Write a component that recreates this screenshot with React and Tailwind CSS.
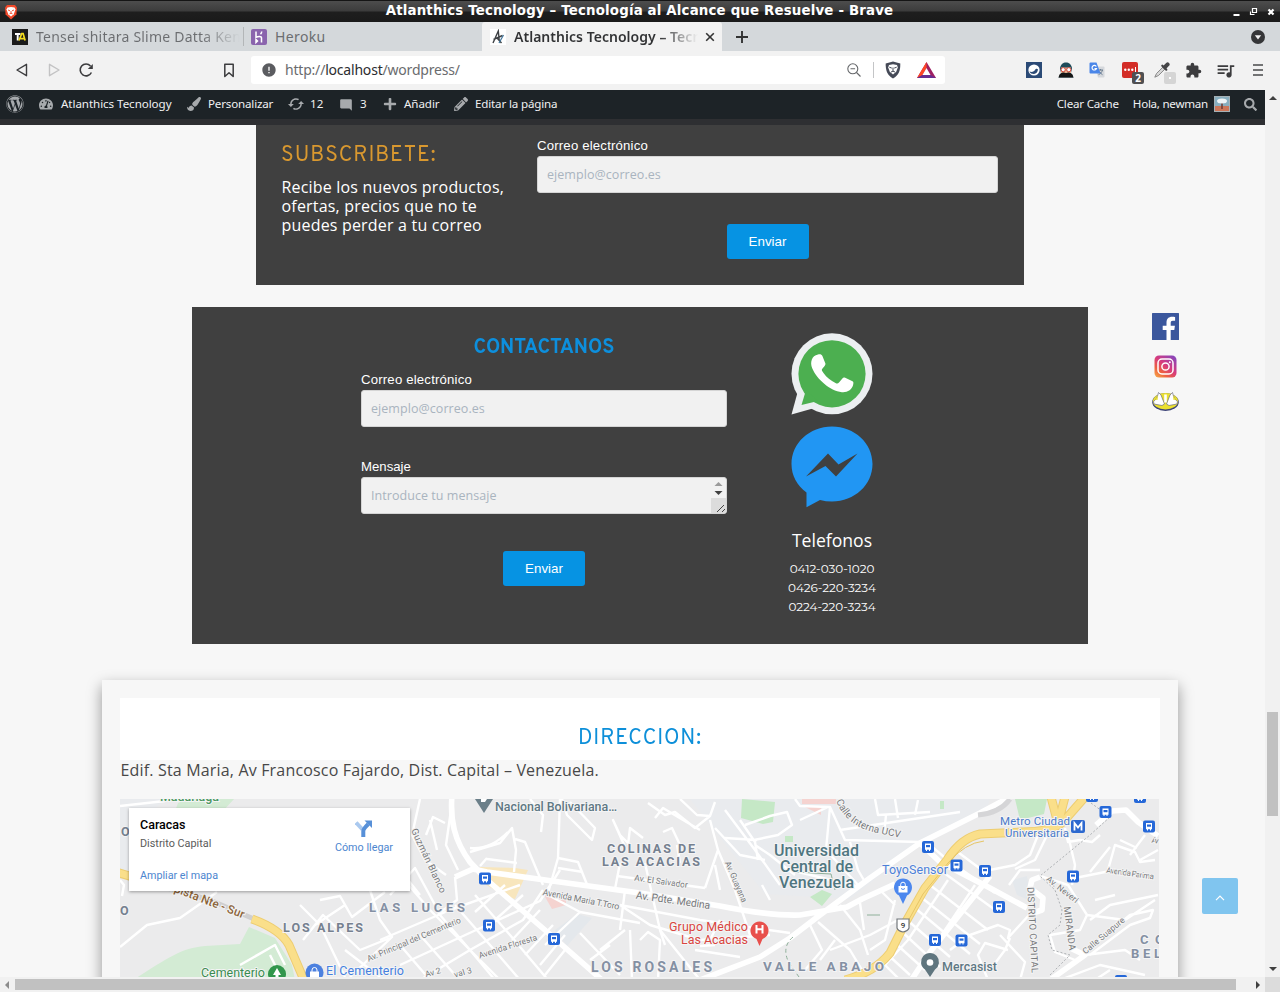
import React from "react";
import { FaWordpress, FaTachometerAlt, FaPaintBrush, FaPlus, FaPencilAlt, FaSearch } from "react-icons/fa";
import { MdExtension, MdQueueMusic, MdModeComment, MdSync, MdError } from "react-icons/md";

const ui = "font-['Noto_Sans','Open_Sans',sans-serif]";
const body = "font-['Open_Sans',sans-serif]";
const label = "font-['Liberation_Sans',sans-serif]";

function TitleBar() {
  return (
    <div className="relative flex h-[22px] items-center border-t border-[#151515] bg-[linear-gradient(#4d4d4d_0px,#3c3c3c_10px,#1e1e1e_11px,#1a1a1a_21px)]">
      <svg className="ml-[4px] h-[16px] w-[14px]" viewBox="0 0 14 16">
        <path d="M3 1h8l2 2.500-.6 7L7 15.500 1.600 10.500 1 3.500z" fill="#f0492a" />
        <path d="M3.500 3.600 7 3l3.500.6 1 2-1.800 4.600L7 12.500l-2.700-2.300L2.500 5.600z" fill="#fff" />
        <path d="M4 6l2 .8M10 6l-2 .8M7 7v2.500M5.500 9.800l1.500-.6 1.500.6" stroke="#f0492a" strokeWidth=".9" fill="none" />
      </svg>
      <div className="flex-1 pb-[2px] pl-[29px] text-center font-['DejaVu_Sans',sans-serif] text-[13.330px] leading-[20px] font-bold tracking-[0.18px] whitespace-nowrap text-white">
        Atlanthics Tecnology – Tecnología al Alcance que Resuelve - Brave
      </div>
      <svg className="mr-[4px] h-[10px] w-[44px]" viewBox="0 0 44 10" fill="none" stroke="#fff">
        <path d="M1.500 8h6" strokeWidth="2" />
        <path d="M20.500 1.500h4v4h-4zM18.500 4.500v3h4" strokeWidth="1.200" />
        <path d="M36.500 2.500l5 5M41.500 2.500l-5 5" strokeWidth="2.200" />
      </svg>
    </div>
  );
}

function TabStrip() {
  return (
    <div className={`flex h-[29px] bg-[#d4d8db] text-[#6b6d70] ${ui}`}>
      <div className="my-[5px] flex w-[244px] items-center border-r border-[#b3b6b8] pl-[12px]">
        <svg className="h-4 w-4 shrink-0" viewBox="0 0 16 16">
          <rect width="16" height="16" fill="#1b1b1b" />
          <path d="M3 5h5.500M5.700 5v6.500" stroke="#fff" strokeWidth="1.900" />
          <path d="M7 11.500 9.800 4.500h1.300l2 7M8.500 9.700h4" stroke="#f3dc1c" strokeWidth="1.700" fill="none" />
        </svg>
        <span className="ml-[8px] w-[204px] overflow-hidden bg-[linear-gradient(90deg,#6b6d70_165px,#d4d8db_204px)] bg-clip-text text-[14px] leading-[20px] tracking-[0.22px] whitespace-nowrap text-transparent">
          Tensei shitara Slime Datta Ken
        </span>
      </div>
      <div className="flex w-[238px] items-center pl-[7px]">
        <svg className="h-4 w-4" viewBox="0 0 16 16">
          <rect width="16" height="16" rx="2" fill="#8a64ad" />
          <path d="M5 2.500v5.800c2-.9 5.500-1.400 5.500.8v4.400M10.700 2.500c0 1.200-.5 2-1.200 2.700M5 10.500v3l1.500-1.500z" stroke="#fff" strokeWidth="1.500" fill="none" />
        </svg>
        <span className="ml-[8px] text-[14px] tracking-[0.38px]">Heroku</span>
      </div>
      <div className="flex w-[240px] items-center rounded-t-[3px] bg-[#f2f2f2] pl-[8px] text-[#333]">
        <svg className="h-4 w-4 shrink-0" viewBox="0 0 16 16">
          <rect width="16" height="16" fill="#fff" />
          <path d="M3 14 8.300 2 9.300 12M3.500 10.500 12.500 6.500M7 9l4.500 5" stroke="#3d4044" strokeWidth="1.400" fill="none" />
          <path d="M13.500 6 9 14" stroke="#44789e" strokeWidth="1.300" />
        </svg>
        <span className="ml-[8px] w-[184px] overflow-hidden bg-[linear-gradient(90deg,#303133_145px,#f2f2f2_184px)] bg-clip-text text-[14px] leading-[20px] font-semibold tracking-[0.03px] whitespace-nowrap text-transparent">
          Atlanthics Tecnology – Tecnología
        </span>
        <svg className="ml-[7px] h-[10px] w-[10px]" viewBox="0 0 10 10"><path d="M1.200 1.200l7.600 7.600M8.800 1.200 1.200 8.800" stroke="#333" strokeWidth="1.600" /></svg>
      </div>
      <svg className="mt-[8px] ml-[13px] h-[14px] w-[14px]" viewBox="0 0 14 14"><path d="M7 1v12M1 7h12" stroke="#333" strokeWidth="1.900" /></svg>
      <svg className="mt-[8px] mr-[15px] ml-auto h-[14px] w-[14px]" viewBox="0 0 14 14">
        <circle cx="7" cy="7" r="7" fill="#353638" />
        <path d="M3.800 5.200h6.400L7 9.600z" fill="#f2f2f2" />
      </svg>
    </div>
  );
}

function Extensions() {
  return (
    <div className="ml-auto flex items-center pr-[17px]">
      <svg className="h-4 w-4" viewBox="0 0 16 16">
        <rect width="16" height="16" fill="#2b4a76" />
        <circle cx="8" cy="8" r="5.600" fill="#fff" />
        <path d="M3.500 9.500c2.500 1 4.500.2 6-2.200 1-.8 2-.5 2.500.3-.3 2.800-2 4.400-4 4.400-2.300 0-4-.8-4.500-2.500z" fill="#2b4a76" />
      </svg>
      <svg className="ml-[16px] h-4 w-4" viewBox="0 0 16 16">
        <path d="M2 6C3 2 5 .5 8 .5S13 2 14 6l-1 5 2.500 4.500H.5L3 11z" fill="#1f4b5a" />
        <path d="M3 5.500h10v5.500H3z" fill="#e9b391" />
        <circle cx="5.200" cy="7.700" r="2.100" fill="#fff" stroke="#c8382e" strokeWidth=".9" />
        <circle cx="10.800" cy="7.700" r="2.100" fill="#fff" stroke="#c8382e" strokeWidth=".9" />
        <path d="M1.500 12.500c2.500-2.500 5-2.500 6.500-1.300 1.500-1.200 4-1.200 6.500 1.300l1 3H.5z" fill="#151515" />
      </svg>
      <svg className="ml-[15px] h-4 w-4" viewBox="0 0 16 16">
        <path d="M6 4.500h8.500q1 0 1 1V14.500q0 1-1 1H9z" fill="#d5d8dc" />
        <path d="M9 8h5M11.500 7v1.300M13.500 8c-.7 2.300-2 3.700-4 4.700M10.500 9.500c.7 1.400 1.700 2.400 3 3.200" stroke="#6d7e90" fill="none" />
        <path d="M1 .5h6.500l4 11H1.500q-1 0-1-1V1.500q0-1 1-1z" fill="#4a86e8" />
        <path d="M7.300 4.500A2.300 2.300 0 1 0 7.500 6.500H5.500" stroke="#fff" strokeWidth="1.200" fill="none" />
      </svg>
      <div className="relative ml-[17px] h-4 w-4 rounded-[2px] bg-[#d32d27]">
        <svg className="h-4 w-4" viewBox="0 0 16 16"><g fill="#fff"><circle cx="3.300" cy="7.800" r="1.200" /><circle cx="6.800" cy="7.800" r="1.200" /><circle cx="10.300" cy="7.800" r="1.200" /><path d="M13 5h1v5h-1z" /></g></svg>
        <span className={`absolute top-[10px] left-[10px] flex h-[12px] w-[12px] items-center justify-center rounded-[2px] bg-[#505052] text-[10px] leading-[12px] font-bold text-white ${ui}`}>2</span>
      </div>
      <div className="relative ml-[16px] h-4 w-4">
        <svg className="h-4 w-4" viewBox="0 0 16 16">
          <path d="M9 5 2.500 11.500.8 15.200 4.500 13.500 11 7z" fill="#d6d6d6" stroke="#808080" strokeWidth=".9" />
          <path d="M8.300 3.700l4 4" stroke="#454547" strokeWidth="2.200" strokeLinecap="round" />
          <path d="M11 5 13.600 2.400" stroke="#454547" strokeWidth="4" strokeLinecap="round" />
        </svg>
        <span className="absolute top-[10px] left-[10px] flex h-[12px] w-[12px] items-center justify-center rounded-[2px] bg-[#d5d5d5]"><i className="h-[2px] w-[2px] bg-white" /></span>
      </div>
      <MdExtension className="ml-[15px] h-[17px] w-[17px] text-[#3c3c3e]" />
      <MdQueueMusic className="ml-[13px] h-[21px] w-[21px] text-[#3c3c3e]" />
      <svg className="ml-[17px] h-[14px] w-[10px]" viewBox="0 0 10 14"><path d="M0 2h10M0 7h10M0 12h10" stroke="#48494b" strokeWidth="1.600" /></svg>
    </div>
  );
}

function Toolbar() {
  return (
    <div className="flex h-[39px] items-center bg-[#f2f2f2] pb-px">
      <svg className="ml-[16px] h-[14px] w-[12px]" viewBox="0 0 12 14"><path d="M10.500 1.300v11.400L1 7z" fill="none" stroke="#3c3c3e" strokeWidth="1.400" strokeLinejoin="round" /></svg>
      <svg className="ml-[20px] h-[14px] w-[12px]" viewBox="0 0 12 14"><path d="M1.500 1.300v11.400L11 7z" fill="none" stroke="#c3c3c4" strokeWidth="1.400" strokeLinejoin="round" /></svg>
      <svg className="ml-[19px] h-[15px] w-[15px]" viewBox="0 0 15 15">
        <path d="M12.400 9.500A5.900 5.900 0 1 1 11.500 3" fill="none" stroke="#3c3c3e" strokeWidth="1.600" />
        <path d="M13.800 1v5H8.800z" fill="#3c3c3e" />
      </svg>
      <svg className="ml-[130px] h-[15px] w-[10px]" viewBox="0 0 10 15"><path d="M.8 1.200h8.400v12.300L5 9.800.8 13.500z" fill="none" stroke="#3c3c3e" strokeWidth="1.500" strokeLinejoin="round" /></svg>
      <div className="ml-[17px] flex h-[28px] w-[694px] items-center rounded-[3px] bg-white pl-[10px]">
        <MdError className="h-[16px] w-[16px] text-[#5b5c60]" />
        <span className={`ml-[8px] pb-px text-[14px] tracking-[-0.2px] whitespace-nowrap text-[#6a6b6e] ${ui}`}>
          http://<span className="text-[#2c2d30]">localhost</span>/wordpress/
        </span>
        <svg className="ml-auto h-[14px] w-[14px]" viewBox="0 0 14 14" fill="none" stroke="#65676a" strokeWidth="1.100"><circle cx="5.800" cy="5.800" r="5" /><path d="M9.500 9.500 13.500 13.500M3.500 5.800h4.600" /></svg>
        <div className="ml-[12px] h-[16px] w-px bg-[#c4c5c7]" />
        <svg className="ml-[11px] h-[18px] w-[16px]" viewBox="0 0 16 18">
          <path d="M8 .5 15.300 2.500C15.500 9.500 13.700 14.200 8 17.500 2.300 14.200.5 9.500.7 2.500z" fill="#454a57" />
          <path d="M4 4l4-.8L12 4l.8 2.500-1.600 4.200L8 13.500l-3.200-2.800L3.200 6.500z" fill="#fff" />
          <path d="M4.300 6.200l2.500.9M11.700 6.200l-2.500.9M8 6.500V10M6 11l2-.8 2 .8" stroke="#454a57" strokeWidth="1" fill="none" />
        </svg>
        <svg className="mr-[9px] ml-[16px] h-[16px] w-[19px]" viewBox="0 0 19 16">
          <path d="M9.500 0 19 16H0z" fill="#9e1f63" />
          <path d="M9.500 0 0 16l5.500-3 4-7z" fill="#ff4724" />
          <path d="M0 16h19l-5.500-3h-8z" fill="#662d91" />
          <path d="M9.500 6 13.500 13h-8z" fill="#fff" />
        </svg>
      </div>
      <Extensions />
    </div>
  );
}

function AdminItem({ icon: Icon, text, className, gap }) {
  return (
    <div className={`flex shrink-0 items-center whitespace-nowrap ${className}`}>
      <Icon className={`h-[14px] w-[14px] shrink-0 text-[#a7aaad] ${gap}`} />
      <span>{text}</span>
    </div>
  );
}

function AdminBar() {
  return (
    <div className={`flex h-[29px] items-center bg-[#1d2327] pb-px text-[11.600px] text-[#f0f0f1] ${ui}`}>
      <FaWordpress className="mr-[15px] ml-[6px] h-[18px] w-[18px] shrink-0 text-[#a7aaad]" />
      <AdminItem icon={FaTachometerAlt} text="Atlanthics Tecnology" gap="mr-[8px]" className="w-[148px] tracking-[-0.06px]" />
      <AdminItem icon={FaPaintBrush} text="Personalizar" gap="mr-[7px]" className="w-[101px] tracking-[-0.18px]" />
      <AdminItem icon={MdSync} text="12" gap="mr-[7px] ml-px rotate-90 scale-125" className="w-[51px]" />
      <AdminItem icon={MdModeComment} text="3" gap="mr-[7px] translate-y-px" className="w-[44px]" />
      <AdminItem icon={FaPlus} text="Añadir" gap="mr-[7px]" className="w-[71px] tracking-[-0.08px]" />
      <AdminItem icon={FaPencilAlt} text="Editar la página" gap="mr-[7px]" className="w-[110px] tracking-[-0.16px]" />
      <span className="ml-auto tracking-[-0.2px]">Clear Cache</span>
      <span className="ml-[14px] tracking-[-0.26px]">Hola, newman</span>
      <svg className="ml-[6px] h-[16px] w-[16px]" viewBox="0 0 16 16">
        <rect width="16" height="16" fill="#87aebf" />
        <rect y="10" width="16" height="6" fill="#cc7659" />
        <path d="M8 5v8" stroke="#6e3b35" strokeWidth="1.500" />
        <ellipse cx="8" cy="5" rx="5" ry="2.500" fill="#eef4f6" />
        <rect x=".5" y=".5" width="15" height="15" fill="none" stroke="#a5b1b6" />
      </svg>
      <FaSearch className="mr-[8px] ml-[14px] h-[13px] w-[13px] text-[#a7aaad]" />
    </div>
  );
}

function EmailField() {
  return (
    <div className={`h-[37px] rounded-[3px] border border-[#d5d5d5] bg-[#f1f1f1] pl-[9px] text-[12.500px] leading-[35px] tracking-[0.06px] text-[#a9b4bf] ${body}`}>ejemplo@correo.es</div>
  );
}

function SendButton() {
  return <button className={`h-[35px] w-[82px] rounded-[3px] bg-[#0693e3] text-[13.333px] text-white ${label}`}>Enviar</button>;
}

function Subscribe() {
  return (
    <section className="ml-[256px] flex h-[160px] w-[768px] bg-[#404040] px-[26px] text-white">
      <div className="w-[255px]">
        <h2 className="mt-[16px] -ml-px w-fit origin-left scale-x-[0.945] text-[22.500px] leading-[30px] tracking-[1px] text-[#d9982f] font-['Overpass','Roboto',sans-serif]">SUBSCRIBETE:</h2>
        <p className={`mt-[7px] -ml-[0.5px] w-[240px] text-[16px] leading-[19px] tracking-[0.19px] ${body}`}>
          Recibe los nuevos productos,<br />ofertas, precios que no te<br />puedes perder a tu correo
        </p>
      </div>
      <div className="flex-1">
        <div className={`mt-[13px] mb-[2px] text-[13.200px] leading-[16px] tracking-[0.18px] ${label}`}>Correo electrónico</div>
        <EmailField />
        <div className="mt-[31px] flex justify-center"><SendButton /></div>
      </div>
    </section>
  );
}

function WhatsApp() {
  return (
    <svg className="h-[82px] w-[82px]" viewBox="0 0 82 82">
      <path d="M.5 81.500 7.500 56l16 19z" fill="#eceff1" />
      <circle cx="41" cy="40.800" r="40.500" fill="#eceff1" />
      <circle cx="41" cy="40.800" r="33.600" fill="#4caf50" />
      <path d="M10.500 72 15 57l12 11z" fill="#4caf50" />
      <path d="M27 21.500c2-.5 3.700-.2 4.400 1.400l3 7.500c.6 1.500-2.600 4.500-3.400 5.800-.6 1 .3 2 1.500 3.800 3.200 4.500 7.200 7.700 12 10 1.600.8 2.400.7 3.500-.6l3.600-4.200c.8-1 1.600-.8 2.600-.4l7.300 3.500c1 .5 1 1.300.8 2.800-.9 6-6.400 8.600-11.400 8.100-12-1.500-25-13-29.700-24-2.400-5.700-.6-12.500 5.800-13.700z" fill="#fff" />
    </svg>
  );
}

function Messenger() {
  return (
    <svg className="mt-[11px] h-[82px] w-[82px]" viewBox="0 0 82 82">
      <path d="M41 .5C18.500.5.500 17.200.500 38c0 11.600 5.600 21.600 15 28.500V81.200L29 74c4 1 8 1.500 12 1.500 22.500 0 40.500-16.700 40.500-37.500S63.500.500 41 .500z" fill="#2196f3" />
      <path d="M15 50.500 37 27.500l10.500 11 19-11L45 50.500 34.500 40z" fill="#404040" />
    </svg>
  );
}

function Contact() {
  return (
    <section className="ml-[192px] flex h-[337px] w-[896px] bg-[#404040] pt-[26px] pl-[169px] text-white">
      <div className="w-[366px]">
        <h2 className="mt-[2px] scale-x-[0.93] text-center text-[21.300px] leading-[26px] font-bold text-[#0d8fdd] font-['Overpass','Roboto',sans-serif]">CONTACTANOS</h2>
        <div className={`mt-[11px] mb-[2px] text-[13.200px] leading-[16px] tracking-[0.18px] ${label}`}>Correo electrónico</div>
        <EmailField />
        <div className={`mt-[32px] mb-[2px] text-[13.200px] leading-[16px] ${label}`}>Mensaje</div>
        <div className={`flex h-[37px] justify-between overflow-hidden rounded-[3px] border border-[#d5d5d5] bg-[#f1f1f1] pl-[9px] text-[12.500px] leading-[35px] text-[#a9b4bf] ${body}`}>
          <span className="tracking-[0.05px]">Introduce tu mensaje</span>
          <svg className="h-[35px] w-[15px]" viewBox="0 0 15 35">
            <path d="M3.500 8h8L7.500 4z" fill="#9a9a9a" /><path d="M3.500 13h8L7.500 17z" fill="#404040" />
            <path d="M0 20h15v15H0z" fill="#dcdcdc" /><path d="M6 34l7-7M11 34l3-3" stroke="#444" />
          </svg>
        </div>
        <div className="mt-[37px] flex justify-center"><SendButton /></div>
      </div>
      <div className="ml-[44px] flex w-[122px] flex-col items-center">
        <div className="-ml-px flex flex-col">
          <WhatsApp />
          <Messenger />
        </div>
        <div className={`mt-[20px] text-[17.600px] leading-[24px] ${body}`}>Telefonos</div>
        <div className="mt-[7px] text-center font-['Montserrat','Lato',sans-serif] text-[12px] leading-[19px] tracking-[-0.06px]">0412-030-1020<br />0426-220-3234<br />0224-220-3234</div>
      </div>
    </section>
  );
}

function Social() {
  return (
    <div className="absolute top-[313px] left-[1152px] flex w-[27px] flex-col items-center">
      <svg className="h-[27px] w-[27px]" viewBox="0 0 27 27">
        <rect width="27" height="27" rx=".5" fill="#3b579d" />
        <path d="M14.500 27V17h-3.800v-4.200h3.800V9.600c0-3.800 2.200-5.900 5.600-5.900 1.300 0 2.500.1 3 .2v3.800h-2.200c-1.700 0-2.200.9-2.200 2.200v2.900h4.200l-.6 4.200h-3.600v10z" fill="#fff" />
      </svg>
      <svg className="mt-[15px] h-[23px] w-[23px]" viewBox="0 0 23 23">
        <defs><linearGradient id="ig" x1="0" y1="1" x2=".8" y2="0"><stop offset="0" stopColor="#f7b14a" /><stop offset=".3" stopColor="#ee6040" /><stop offset=".6" stopColor="#d53b80" /><stop offset="1" stopColor="#8b45b8" /></linearGradient></defs>
        <rect x=".5" y=".5" width="22" height="22" rx="4.500" fill="url(#ig)" />
        <g fill="none" stroke="#fff" strokeWidth="1.500"><rect x="4" y="4" width="15" height="15" rx="4" /><circle cx="11.500" cy="11.500" r="3.600" /></g>
        <circle cx="15.800" cy="7.300" r="1" fill="#fff" />
      </svg>
      <svg className="mt-[13px] h-[21px] w-[27px]" viewBox="0 0 27 21">
        <ellipse cx="13.500" cy="11" rx="13.300" ry="9" fill="#3d4478" />
        <ellipse cx="13.500" cy="10.200" rx="12.600" ry="8.200" fill="#ebe02f" />
        <path d="M1.500 10.500C4 9 5.500 6 6.500 1.500L9 4l3.500 9-2.500 1.500L2 13zM25.500 10.500C23 9 21.500 6 20.500 1.500L18 4l-3.500 9 2.500 1.500 8-1.500z" fill="#fff" stroke="#6a6c80" strokeWidth=".7" />
        <path d="M12.200 3.500h2.600v8h-2.600z" fill="#fff" />
        <path d="M3 8.500 6 5l-.5 4zM24 8.500 21 5l.5 4z" fill="#ebe02f" />
      </svg>
    </div>
  );
}

const buses = [[485, 878.5], [489, 925.5], [554, 939], [928, 847], [956.5, 865.5], [985, 871], [999, 907], [935, 940], [961.5, 940.5], [1105.5, 812], [1149, 826.5], [1073, 876.5], [1092, 796], [1140, 797], [1121, 981]];

const mainRoads = "M452 795C450 820 454 840 470 862L487 880 553 937 602 980M455 877L473 869 487 872 567 883 640 893 720 906Q770 916 800 915L847 907 862 899 895 884M700 980L760 957 790 938 820 915 870 878 920 843 980 813 1010 797M920 843L940 862 990 888 1027 908M1040 877L1032 880 1030 888 1043 898 1042 910 1030 914M1096 825L1112 811 1126 810 1138 822 1158 836M990 876L930 952 908 985M1050 980L1085 955 1070 948";
const minorRoads = [
  "M120 947L147 925 180 918 217 892M120 806L165 801M120 880L124 885 122 896",
  "M300 905L320 925 332 950 345 977M303 940L323 915 360 950 390 938M315 925L345 905 352 917 385 892M320 900L340 896 348 910M370 890L380 920 392 937 350 977M345 950L380 977M240 965L275 945 285 965M270 955L280 975",
  "M452 803L446 845 458 870M420 799L412 835 425 860 446 875M430 820L437 850M426 835L433 817 445 823M370 890L400 875 430 910 460 940 500 980M390 895L415 868 435 905M400 870L420 895M455 877L457 900 438 914",
  "M400 965L487 925 540 901 560 870M420 980L470 950 523 920 543 890M380 940L450 910 520 885M455 905L490 945 520 980M440 915L470 950 495 980M475 895L510 935 548 980M505 885L475 912M523 895L495 920M540 910L512 940M553 925L525 955M565 935L540 965M565 950L545 975M400 945L430 980M420 935L455 975",
  "M470 852L500 843 512 828 516 850 514 872M515 839L525 842 543 885M487 859L517 863M487 858L480 866M560 799L558 858 548 893M558 858L578 862 588 887M558 868L583 872M530 799L543 815 541 832M562 799L567 815 592 840 595 828 570 802M470 848Q490 850 508 832",
  "M620 863L615 889M625 847L613 820 620 835 630 845M628 845L630 828 643 838M645 863L660 930 665 945M648 803L665 815 675 812 695 828 710 816M680 799L697 815 710 816 715 802M655 818L663 808 678 817 700 830M663 832L672 828 680 845M677 845L680 863M617 876L705 888M705 888L718 850 710 820M718 850L735 890 750 935M715 828L740 855 765 860",
  "M548 895L580 912 640 923M620 905L650 925 700 940 770 935M580 912L545 945M625 890L620 930M620 905L700 920 790 933M630 930L632 980M660 930L700 980M640 940L648 932 660 940 658 980M610 945L590 960M580 933L620 975M600 950L625 930M695 950L740 957M700 946L715 945",
  "M754 840L778 835 792 825 787 812 770 816 745 825M725 810L755 850 780 885M725 838L757 840M755 845L770 855 795 875M762 885L770 900M720 920L710 940M715 865L720 890M740 820L755 842 758 860",
  "M795 799L800 806 830 807 826 850 860 887M830 807L845 840 920 842M875 799L878 815 930 812M895 799L898 818M886 815L884 835M840 830L960 812M800 820L828 807M918 800L915 815M860 887L790 870M930 845L950 862M850 842L858 870 865 882",
  "M840 905L860 930 868 955M860 903L864 930M818 922L850 950 862 970M830 950L870 935 898 920M820 960L835 940M810 925L822 950 805 970M880 890L895 905M895 900L885 940 870 950",
  "M930 885L988 930M922 898L980 944M915 908L970 954M906 919L950 957M900 930L940 967M895 943L925 970M887 954L910 975M940 870L998 912M948 860L995 893M880 960L900 980M948 880L908 940 885 965M975 885L935 945",
  "M990 876L955 850 948 860M1030 914L1008 938 1010 930 998 925 970 935 950 950M1010 938L1005 950 990 970M1008 950L985 943 978 955 988 980M1000 935L1025 962 1020 980M1009 885L1020 870 1040 870M990 870L1015 865 1030 855 1038 835",
  "M1040 876L1068 885 1087 915 1080 930 1050 935 1055 952 1075 960M1087 915L1125 920 1155 900M1075 878L1115 870 1135 875M1090 920L1110 905 1158 895M1108 870L1115 845 1135 852 1140 862 1155 860M1065 828L1068 842 1080 840M1080 840L1092 842 1100 835M1095 900L1115 895M1145 835L1130 855M1050 829L1035 860 1015 869M1072 885L1075 865 1068 835M1110 847L1090 872M1090 955L1130 925 1150 918 1153 910 1130 915 1090 948M1085 955L1125 950 1140 960M1060 980L1100 965 1145 975M1095 980L1110 970M1120 840L1137 848M1140 860L1158 850",
];

const labels = [
  ["Nacional Bolivariana…", 495, 811, 122, "#5f7883", 12.5, 500],
  ["COLINAS DE", 607, 853, 88, "#75808f", 12.5, 700],
  ["LAS ACACIAS", 602, 866, 98, "#75808f", 12.5, 700],
  ["LAS LUCES", 369, 911.5, 96, "#8490a3", 13, 700],
  ["LOS ALPES", 283, 932, 80, "#75808f", 12.5, 700],
  ["LOS ROSALES", 591, 972, 121, "#8490a3", 14, 700],
  ["VALLE ABAJO", 763, 971, 121, "#8490a3", 13.5, 700],
  ["Universidad", 774, 855.5, 85, "#4f7680", 16, 500],
  ["Central de", 780, 871.5, 73, "#4f7680", 16, 500],
  ["Venezuela", 779, 887.5, 75, "#4f7680", 16, 500],
  ["ToyoSensor", 882, 874, 66, "#4c80d8", 12.5, 400],
  ["Metro Ciudad", 1000, 825, 70, "#4b7ac9", 11.5, 400],
  ["Universitaria", 1005, 836.5, 64, "#4b7ac9", 11.5, 400],
  ["Grupo Médico", 669, 931, 79, "#d94540", 12.5, 400],
  ["Las Acacias", 681, 943.5, 67, "#d94540", 12.5, 400],
  ["Cementerio", 201, 977, 64, "#3a8c50", 12.5, 400],
  ["El Cementerio", 326, 975, 78, "#4580df", 12.5, 400],
  ["Mercasist", 942, 970.5, 55, "#5f7883", 12.5, 500],
  ["Madariaga", 160, 801, 59, "#4b9860", 12.5, 500],
  ["O", 121, 836, 9, "#74808f", 12.5, 700],
  ["O", 120, 915, 9, "#74808f", 12.5, 700],
  ["CO", 1140, 943.5, 24, "#8490a3", 13, 700],
  ["BEL", 1131, 957.5, 30, "#8490a3", 13, 700],
];

const tilted = [
  ["Av. El Salvador", 661, 882, 54, 8, 8.5], ["Av. Pdte. Medina", 673, 901, 75, 8, 10.5],
  ["Avenida Maria T.Toro", 581, 900, 78, 11, 9], ["Av. Guayana", 735.5, 882, 44, 67, 8.5],
  ["Av. Principal del Cementerio", 414, 940, 101, -23, 8.5], ["Avenida Floresta", 508, 947, 61, -18, 8.5],
  ["Av 2", 433, 973, 16, -16, 8.5], ["val 3", 463, 973, 18, -16, 8.5], ["Guzmán Blanco", 428, 861, 70, 65, 9.5],
  ["Av. Neveri", 1062, 890, 38, 38, 8.5], ["Avenida Parima", 1130, 874, 48, 8, 8],
  ["Calle Suapure", 1104, 936, 52, -40, 8.5], ["DISTRITO CAPITAL", 1032, 930, 86, 87, 9.5],
  ["MIRANDA", 1069, 928.5, 44, 83, 9.5], ["Av", 1155, 841, 7, 10, 8],
];

function MapDrawing() {
  return (
    <svg className="col-start-1 row-start-1 h-[178px] w-[1039px] font-['Roboto',sans-serif]" viewBox="120 799 1039 178">
      <rect x="120" y="799" width="1039" height="178" fill="#ebebec" />
      <path d="M120 799h45l-25 25-3 45-17 5zM690 799h300l-5 15-65 30-70 55-85-5-40-50z" fill="#e9ebee" />
      <path d="M133 980C165 960 180 948 205 946L240 944 249 927 275 938 292 965 295 980zM170 825L178 803 190 798 235 798 210 825z" fill="#d3ebd4" />
      <path d="M742 799l33 3-2 20-10 2-22-6zM1015 799h32l-3 15-24 6zM785 836h8v6h-8zM810 897l12-7 10 4-10 12zM940 801h4v8h-4z" fill="#c5e8c6" />
      <path d="M480 867L515 868 528 870 515 899 505 896 478 880z" fill="#f8e6bd" />
      <path d="M544 895l22 2v8l-14 4zM802 799h34v5h-34zM805 807h16v8z" fill="#f5d3d0" />
      <path d="M555 930l22-16 15 4-25 28zM1012 880l15-4 4 25-14-6z" fill="#e4e8ec" />
      <g fill="none" stroke="#fff" strokeWidth="2.400" strokeLinejoin="round">
        {minorRoads.map((d) => <path key={d} d={d} />)}
      </g>
      <path d={mainRoads} fill="none" stroke="#fff" strokeWidth="5.600" strokeLinejoin="round" />
      <path d="M978 815Q1000 813 1010 799" stroke="#d5d5d7" strokeWidth="5" fill="none" />
      <path d="M164 887L210 900 254 919" stroke="#cfcfd0" strokeWidth="5" fill="none" />
      <g fill="none" strokeLinejoin="round">
        <path d="M116 872l20 6M252 919Q280 929 289 945L304 980M845 980Q875 972 890 953L904 925 925 888 947 860Q961 838 980 834L1022 832Q1051 832 1063 822L1085 797M1051 797L1057 820M1065 797L1059 820" stroke="#edcd71" strokeWidth="9" />
        <path d="M116 872l20 6M252 919Q280 929 289 945L304 980M845 980Q875 972 890 953L904 925 925 888 947 860Q961 838 980 834L1022 832Q1051 832 1063 822L1085 797M1051 797L1057 820M1065 797L1059 820" stroke="#fadf8a" strokeWidth="7" />
        <path d="M902 932L923 894 948 863Q965 843 984 841" stroke="#e6c566" strokeWidth="1" />
        <path d="M1091 803L1110 817 1090 835 1040 876 1055 890 1062 910 1060 925 1048 935 1052 950 1070 955 1050 975" stroke="#aeb1b4" strokeDasharray="2 2" />
        <path d="M867 915h13M835 890l-4-16-36-2" stroke="#8fb09a" />
        <path d="M793 937q-12 10-4 26l10 14" stroke="#8fb09a" strokeDasharray="4 3" />
      </g>
      <defs>
        <path id="calle" d="M836 801Q846 825 873 832L915 841" />
        <path id="autopista" d="M164 888L252 922" />
      </defs>
      <g fill="#77797c" stroke="#f3f3f3" strokeWidth="2" paintOrder="stroke">
        {tilted.map(([t, x, y, w, a, s]) => (
          <text key={t} x={x} y={y} fontSize={s} textAnchor="middle" dominantBaseline="middle" textLength={w} transform={`rotate(${a} ${x} ${y})`}>{t}</text>
        ))}
        <text fontSize="10"><textPath href="#calle">Calle Interna UCV</textPath></text>
        <text fontSize="11.600" fill="#8a6238" fontWeight="500"><textPath href="#autopista">topista Nte - Sur</textPath></text>
      </g>
      <g stroke="#f4f4f5" strokeWidth="2" paintOrder="stroke">
        {labels.map(([t, x, y, w, c, s, wt]) => (
          <text key={t + y} x={x} y={y} fontSize={s} fontWeight={wt} fill={c} textLength={w}>{t}</text>
        ))}
      </g>
      {buses.map(([x, y]) => (
        <g key={`${x}-${y}`} transform={`translate(${x - 6} ${y - 6})`}>
          <rect width="12" height="12" rx="2" fill="#2668d8" />
          <path d="M3 2.500h6v6.300H8v1.200H7V8.800H5v1.200H4V8.800H3z" fill="#fff" /><path d="M4 4h4v2.200H4z" fill="#2668d8" />
        </g>
      ))}
      <rect x="1071" y="820" width="14" height="13" rx="2" fill="#2c68cf" />
      <path d="M1074.500 830.500v-7.500l3.500 4.500 3.500-4.500v7.500" fill="none" stroke="#fff" strokeWidth="1.800" />
      <g>
        <path d="M475 799h18l-9 14z" fill="#6b7f89" /><path d="M481 799h6l-2 3h-4z" fill="#fff" />
        <path d="M759.500 946l-3-7a9 9 0 1 1 6 0z" fill="#e8504c" /><path d="M756.500 925v8.500m6-8.500v8.500m-6-4.200h6" stroke="#fff" strokeWidth="2" />
        <path d="M903 904l-4-8.500a9 9 0 1 1 8 0z" fill="#4c87ee" /><path d="M898.500 886h9v6.500h-9z" fill="#fff" /><path d="M900.700 886v-1.500a2.300 2.300 0 0 1 4.600 0v1.500" fill="none" stroke="#fff" /><path d="M901 888.500q2 2 4 0" stroke="#4c87ee" fill="none" />
        <path d="M930 977l-5-7.500a9 9 0 1 1 10 0z" fill="#60767f" /><circle cx="930" cy="962.500" r="3.300" fill="#fff" />
        <circle cx="277" cy="974" r="9" fill="#31964c" /><path d="M277 968l-4 7h2.500v3h3v-3h2.500z" fill="#fff" />
        <circle cx="314.500" cy="972.500" r="9" fill="#4c80df" /><path d="M310 971.500h9v6h-9z" fill="#fff" /><path d="M312 972v-2a2.500 2.500 0 0 1 5 0v2" fill="none" stroke="#fff" />
        <path d="M897 919h12v9q-1 3-6 4-5-1-6-4z" fill="#fff" stroke="#73787c" strokeWidth="1.200" />
        <text x="903" y="928" fontSize="8" textAnchor="middle" fill="#333" fontWeight="500">9</text>
      </g>
    </svg>
  );
}

function MapCard() {
  return (
    <div className="z-10 col-start-1 row-start-1 mt-[9px] ml-[9px] flex h-[83px] w-[281px] justify-between bg-white pr-[17px] pl-[11px] font-['Roboto',sans-serif] text-[11px] text-[#4d86cf] shadow-[0_1px_3px_rgba(0,0,0,0.35)]">
      <div className="whitespace-nowrap">
        <div className="mt-[9px] text-[12.500px] leading-[16px] font-medium text-black">Caracas</div>
        <div className="mt-[4px] text-[10.850px] leading-[14px] text-[#5b5b5b]">Distrito Capital</div>
        <div className="mt-[18px] text-[10.750px] leading-[14px]">Ampliar el mapa</div>
      </div>
      <div className="flex flex-col items-center">
        <svg className="mt-[12px] h-[18px] w-[17px]" viewBox="0 0 17 18">
          <path d="M1 2.500 7.500 9.500" stroke="#aac9ef" strokeWidth="4" />
          <path d="M8.300 17V11q0-2 5-7" stroke="#5790d8" strokeWidth="4" fill="none" /><path d="M9.500.5H17V8z" fill="#5790d8" />
        </svg>
        <span className="mt-[3px] text-[10.800px] leading-[14px]">Cómo llegar</span>
      </div>
    </div>
  );
}

function Address() {
  return (
    <section className="mt-[36px] ml-[102px] h-[320px] w-[1076px] bg-[#f7f7f7] px-[18px] pt-[18px] shadow-[0_6px_14px_0_rgba(0,0,0,0.4)]">
      <div className="h-[62px] w-[1040px] bg-white pt-[26px] text-center">
        <h2 className="scale-x-[0.945] text-[22.500px] leading-[30px] tracking-[0.95px] text-[#0d8fd9] font-['Overpass','Roboto',sans-serif]">DIRECCION:</h2>
      </div>
      <p className={`h-[39px] pl-[0.5px] text-[16px] leading-[21px] tracking-[0.17px] text-[#484848] ${body}`}>Edif. Sta Maria, Av Francosco Fajardo, Dist. Capital – Venezuela.</p>
      <div className="grid w-[1039px] items-start justify-items-start">
        <MapDrawing />
        <MapCard />
      </div>
    </section>
  );
}

function Page() {
  return (
    <main className="h-[887px] w-[1265px] overflow-hidden bg-[#f7f7f7]">
      <AdminBar />
      <div className="h-[6px] bg-[#2e2f32]" />
      <Subscribe />
      <div className="h-[22px]" />
      <Contact />
      <Address />
    </main>
  );
}

export default function App() {
  return (
    <div className="relative h-[992px] w-[1280px] overflow-hidden bg-[#f1f1f1]">
      <TitleBar />
      <TabStrip />
      <Toolbar />
      <div className="flex">
        <Page />
        <div className="flex h-[887px] w-[15px] flex-col items-center bg-[#f1f1f1]">
          <svg className="mt-[5px] h-[6px] w-[8px]" viewBox="0 0 8 6"><path d="M0 5h8L4 1z" fill="#404040" /></svg>
          <div className="mt-[611px] h-[104px] w-[11px] bg-[#c1c1c1]" />
          <svg className="mt-[150px] h-[6px] w-[8px]" viewBox="0 0 8 6"><path d="M0 1h8L4 5z" fill="#404040" /></svg>
        </div>
      </div>
      <div className="flex h-[15px] items-center">
        <svg className="ml-[4px] h-[8px] w-[6px]" viewBox="0 0 6 8"><path d="M5 0v8L1 4z" fill="#8c8c8c" /></svg>
        <div className="ml-[5px] h-[11px] w-[1221px] bg-[#c1c1c1]" />
        <svg className="ml-[19px] h-[8px] w-[6px]" viewBox="0 0 6 8"><path d="M1 0v8l4-4z" fill="#404040" /></svg>
        <div className="ml-auto h-[15px] w-[15px] bg-[#dcdcdc]" />
      </div>
      <Social />
      <div className="absolute top-[878px] left-[1202px] flex h-[36px] w-[36px] items-center justify-center rounded-[2px] bg-[#80c5ef]">
        <svg className="mt-[3px] h-[6px] w-[10px]" viewBox="0 0 10 6"><path d="M1 5.200 5 1.200 9 5.200" fill="none" stroke="#fff" strokeWidth="1.200" /></svg>
      </div>
    </div>
  );
}
